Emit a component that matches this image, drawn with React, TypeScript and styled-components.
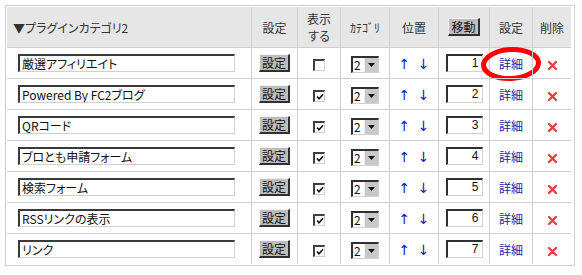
import React from "react";
import styled, { createGlobalStyle } from "styled-components";

const Global = createGlobalStyle`
  html, body { margin: 0; padding: 0; background: #fff; }
  body {
    font-family: "Noto Sans CJK JP", "Liberation Sans", sans-serif;
    font-size: 12px;
    color: #222;
    font-feature-settings: "palt" 1;
  }
`;

const Frame = styled.div`
  margin: 5px 0 0 5px;
  width: 566px;
  border: 1px solid #cfcfcf;
  padding: 1px;
`;

const Table = styled.table`
  border-collapse: separate;
  border-spacing: 0;
  table-layout: fixed;
  width: 564px;
`;

const HeadCell = styled.th<{ $align?: string }>`
  background: #e6e6e6;
  height: 40px;
  padding: 0;
  font-weight: normal;
  font-size: 12px;
  line-height: 17px;
  color: #333;
  text-align: ${(p) => p.$align || "center"};
  padding-left: ${(p) => (p.$align === "left" ? "6px" : "0")};
  vertical-align: middle;
  border-bottom: 1px solid #cfcfcf;
  & + & { border-left: 1px solid #cfcfcf; }
`;

const Cell = styled.td<{ $align?: string }>`
  height: 30px;
  padding: 0;
  text-align: ${(p) => p.$align || "center"};
  vertical-align: middle;
  position: relative;
  & + & { border-left: 1px solid #cfcfcf; }
  tr + tr > & { border-top: 1px solid #cfcfcf; }
`;

const NameInput = styled.div`
  box-sizing: border-box;
  margin-left: 11px;
  width: 217px;
  height: 18px;
  border-top: 2px solid #3a3a3a;
  border-left: 2px solid #3a3a3a;
  border-right: 1px solid #d4d0c8;
  border-bottom: 1px solid #d4d0c8;
  padding-left: 2px;
  font-size: 12px;
  line-height: 15px;
  color: #111;
  text-align: left;
  white-space: nowrap;
  overflow: hidden;
`;

const GrayButton = styled.span`
  display: inline-block;
  box-sizing: border-box;
  height: 18px;
  padding: 0 2px;
  background: #bdbdbd;
  border-top: 1px solid #f4f4f4;
  border-left: 1px solid #f4f4f4;
  border-right: 2px solid #303030;
  border-bottom: 2px solid #303030;
  font-size: 12px;
  line-height: 15px;
  color: #111;
`;

const Check = styled.span`
  display: inline-flex;
  align-items: center;
  justify-content: center;
  box-sizing: border-box;
  width: 12px;
  height: 12px;
  background: #fff;
  border-top: 2px solid #404040;
  border-left: 2px solid #404040;
  border-right: 1px solid #d4d0c8;
  border-bottom: 1px solid #d4d0c8;
  vertical-align: middle;
`;

const SelectBox = styled.span`
  display: inline-flex;
  box-sizing: border-box;
  width: 28px;
  height: 17px;
  background: #fff;
  border-top: 2px solid #303030;
  border-left: 2px solid #303030;
  border-right: 1px solid #d4d0c8;
  border-bottom: 1px solid #d4d0c8;
  vertical-align: middle;
`;

const SelectValue = styled.span`
  flex: 1;
  font-size: 12px;
  line-height: 14px;
  text-align: left;
  padding-left: 1px;
  color: #111;
`;

const SelectArrow = styled.span`
  width: 13px;
  background: #c8c8c8;
  border-left: 1px solid #eee;
  display: flex;
  align-items: center;
  justify-content: center;
`;

const Arrows = styled.span`
  color: #1020c8;
  font-family: "DejaVu Sans", sans-serif;
  font-size: 14px;
  word-spacing: 3px;
`;

const NumInput = styled.div`
  box-sizing: border-box;
  margin: 0 auto;
  width: 37px;
  height: 18px;
  border-top: 2px solid #303030;
  border-left: 2px solid #303030;
  border-right: 1px solid #d4d0c8;
  border-bottom: 1px solid #d4d0c8;
  padding-right: 3px;
  text-align: right;
  font-family: "Liberation Sans", sans-serif;
  font-size: 12px;
  line-height: 15px;
  color: #111;
`;

const DetailLink = styled.a`
  color: #1a24a8;
  text-decoration: none;
  font-size: 12px;
`;

const Circle = styled.svg`
  position: absolute;
  left: -10px;
  top: -2px;
  width: 62px;
  height: 36px;
  pointer-events: none;
`;

const rows = [
  { name: "厳選アフィリエイト", on: false },
  { name: "Powered By FC2ブログ", on: true },
  { name: "QRコード", on: true },
  { name: "ブロとも申請フォーム", on: true },
  { name: "検索フォーム", on: true },
  { name: "RSSリンクの表示", on: true },
  { name: "リンク", on: true },
];

const CrossIcon = () => (
  <svg width="11" height="11" viewBox="0 0 11 11" style={{ verticalAlign: "middle" }}>
    <path d="M2 2 L9 9 M9 2 L2 9" stroke="#e84040" strokeWidth="2.4" strokeLinecap="round" />
  </svg>
);

export default function App() {
  return (
    <>
      <Global />
      <Frame>
        <Table>
          <colgroup>
            <col style={{ width: 244 }} />
            <col style={{ width: 46 }} />
            <col style={{ width: 43 }} />
            <col style={{ width: 49 }} />
            <col style={{ width: 49 }} />
            <col style={{ width: 51 }} />
            <col style={{ width: 43 }} />
            <col style={{ width: 39 }} />
          </colgroup>
          <thead>
            <tr>
              <HeadCell $align="left">▼プラグインカテゴリ2</HeadCell>
              <HeadCell>設定</HeadCell>
              <HeadCell>表示<br />する</HeadCell>
              <HeadCell>ｶﾃｺﾞﾘ</HeadCell>
              <HeadCell>位置</HeadCell>
              <HeadCell><GrayButton>移動</GrayButton></HeadCell>
              <HeadCell>設定</HeadCell>
              <HeadCell>削除</HeadCell>
            </tr>
          </thead>
          <tbody>
            {rows.map((r, i) => (
              <tr key={i}>
                <Cell $align="left"><NameInput>{r.name}</NameInput></Cell>
                <Cell><GrayButton>設定</GrayButton></Cell>
                <Cell>
                  <Check>
                    {r.on && (
                      <svg width="8" height="8" viewBox="0 0 8 8">
                        <path d="M1 3.5 L3 5.8 L7 1.2" stroke="#111" strokeWidth="1.6" fill="none" />
                      </svg>
                    )}
                  </Check>
                </Cell>
                <Cell>
                  <SelectBox>
                    <SelectValue>2</SelectValue>
                    <SelectArrow>
                      <svg width="7" height="4" viewBox="0 0 7 4">
                        <path d="M0 0 H7 L3.5 4 Z" fill="#111" />
                      </svg>
                    </SelectArrow>
                  </SelectBox>
                </Cell>
                <Cell><Arrows>↑ ↓</Arrows></Cell>
                <Cell><NumInput>{i + 1}</NumInput></Cell>
                <Cell>
                  <DetailLink href="#">詳細</DetailLink>
                  {i === 0 && (
                    <Circle viewBox="0 0 62 36">
                      <ellipse cx="31" cy="18" rx="27.5" ry="14.5" fill="none" stroke="#f00" strokeWidth="5" transform="rotate(-3 31 18)" />
                    </Circle>
                  )}
                </Cell>
                <Cell><CrossIcon /></Cell>
              </tr>
            ))}
          </tbody>
        </Table>
      </Frame>
    </>
  );
}
